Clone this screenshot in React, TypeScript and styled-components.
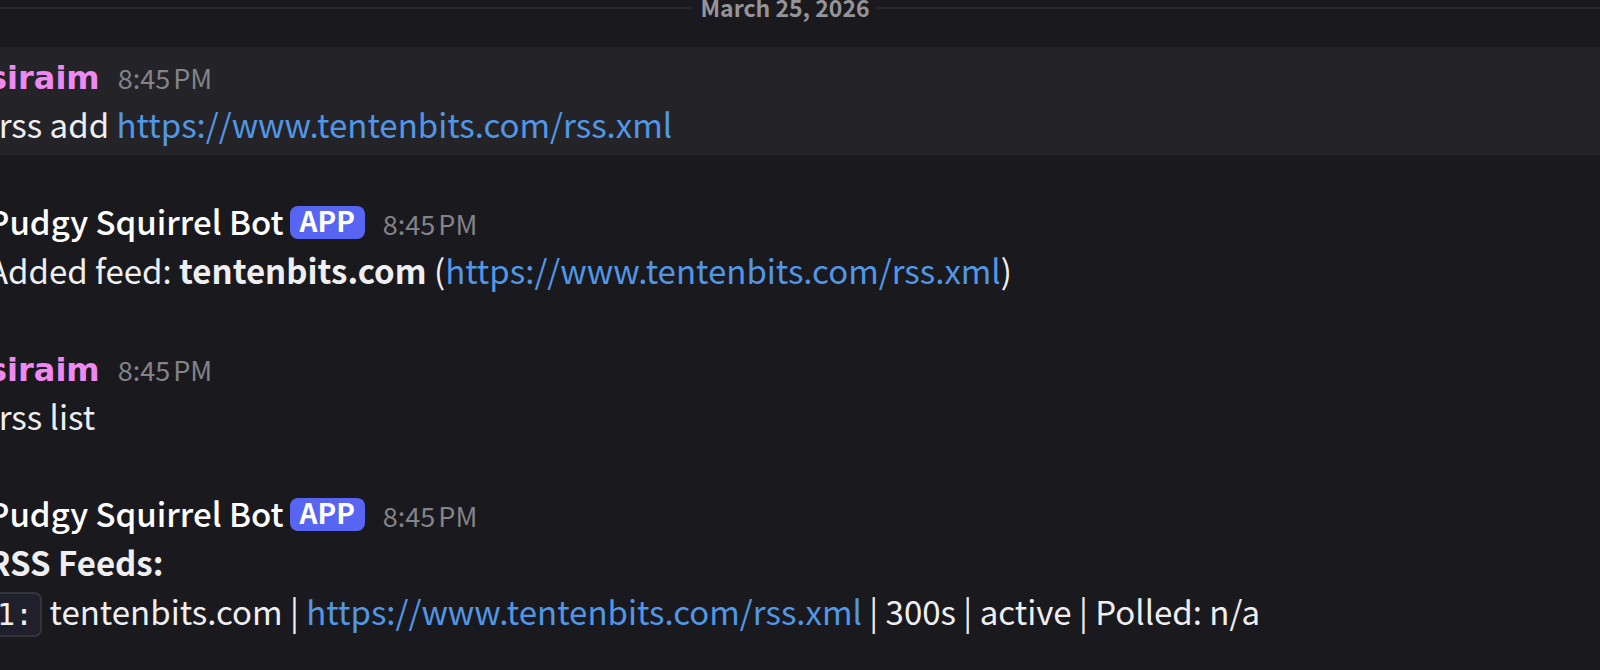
import React from "react";
import styled, { createGlobalStyle } from "styled-components";

const GlobalStyle = createGlobalStyle`
  body {
    margin: 0;
    background: #1a1a1e;
    color: #efeff1;
    font-family: "Noto Sans CJK SC", "Noto Sans", sans-serif;
    overflow: hidden;
  }
`;

const Feed = styled.main`
  margin: -8px 0 0 -30px;
`;

const DateDivider = styled.div`
  display: flex;
  align-items: center;
  gap: 7px;
  margin-bottom: 23px;

  &::before,
  &::after {
    content: "";
    flex: 1;
    height: 2px;
    background: #29292d;
  }
`;

const DateLabel = styled.time`
  padding-bottom: 2px;
  color: #949499;
  font-size: 23px;
  font-weight: 700;
  line-height: 30px;
`;

const MessageList = styled.ol`
  display: flex;
  flex-direction: column;
  gap: 38px;
  margin: 0;
  padding: 0;
  list-style: none;
`;

const MessageItem = styled.li<{ $highlighted?: boolean }>`
  padding: 4px 18px 6px;
  background: ${(p) => (p.$highlighted ? "#242428" : "transparent")};
  font-size: 33px;
  line-height: 49px;
`;

const Header = styled.header`
  display: flex;
  align-items: baseline;
  white-space: nowrap;

  &::before {
    content: "\\200b";
  }
`;

const BotName = styled.span`
  color: #ffffff;
  font-weight: 500;
`;

const PixelName = styled.span`
  color: #ee89f1;
  font-family: "DejaVu Sans", sans-serif;
  font-size: 32px;
  font-weight: 700;
  line-height: 32px;
`;

const AppBadge = styled.span`
  align-self: center;
  margin: 2px 0 0 6px;
  padding: 0 10px 5px;
  border-radius: 8px;
  background: #5865f2;
  color: #ffffff;
  font-size: 28px;
  font-weight: 700;
  line-height: 28px;
`;

const Timestamp = styled.time`
  margin-left: 18px;
  color: #838388;
  font-size: 27px;
  line-height: 32px;
`;

const Line = styled.p`
  margin: 0;
`;

const Link = styled.a`
  color: #5197e6;
  text-decoration: none;
`;

const InlineCode = styled.code`
  padding: 3px 7px;
  border: 2px solid #34343d;
  border-radius: 8px;
  background: #1f202b;
  font-family: "DejaVu Sans Mono", monospace;
  font-size: 30px;
  line-height: 32px;
`;

const FEED_URL = "https://www.tentenbits.com/rss.xml";

const FeedLink = () => <Link href={FEED_URL}>{FEED_URL}</Link>;

interface MessageProps {
  bot?: boolean;
  highlighted?: boolean;
  children: React.ReactNode;
}

const Message = ({ bot, highlighted, children }: MessageProps) => (
  <MessageItem $highlighted={highlighted}>
    <Header>
      {bot ? (
        <>
          <BotName>Pudgy Squirrel Bot</BotName>
          <AppBadge>APP</AppBadge>
        </>
      ) : (
        <PixelName>siraim</PixelName>
      )}
      <Timestamp dateTime="2026-03-25T20:45">8:45{"\u202f"}PM</Timestamp>
    </Header>
    {children}
  </MessageItem>
);

export default function App() {
  return (
    <>
      <GlobalStyle />
      <Feed>
        <DateDivider>
          <DateLabel dateTime="2026-03-25">March 25, 2026</DateLabel>
        </DateDivider>
        <MessageList>
          <Message highlighted>
            <Line>
              !rss add <FeedLink />
            </Line>
          </Message>
          <Message bot>
            <Line>
              Added feed: <strong>tentenbits.com</strong> (<FeedLink />)
            </Line>
          </Message>
          <Message>
            <Line>!rss list</Line>
          </Message>
          <Message bot>
            <Line>
              <strong>RSS Feeds:</strong>
            </Line>
            <Line>
              <InlineCode>1:</InlineCode> tentenbits.com | <FeedLink /> | 300s | active | Polled: n/a
            </Line>
          </Message>
        </MessageList>
      </Feed>
    </>
  );
}
